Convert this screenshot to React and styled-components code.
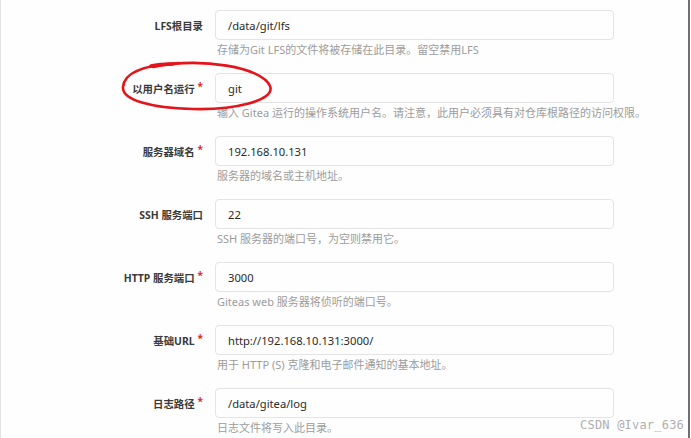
import styled, { createGlobalStyle } from "styled-components";

const GlobalStyle = createGlobalStyle`
  html, body {
    margin: 0;
    padding: 0;
    background: #fff;
  }
  body {
    font-family: "Noto Sans", "Noto Sans CJK SC", sans-serif;
  }
`;

const Frame = styled.div`
  position: relative;
  box-sizing: border-box;
  width: 690px;
  height: 438px;
  overflow: hidden;
  border-left: 1px solid #e2e2e2;
  border-right: 2px solid #707070;
  background: #fefefe;
`;

const Form = styled.div`
  display: flex;
  flex-direction: column;
  padding-top: 10px;
`;

const Field = styled.div`
  display: grid;
  grid-template-columns: 202px 399px;
  column-gap: 12px;
  row-gap: 2px;
  height: 63px;
  align-content: start;
`;

const Label = styled.label`
  align-self: center;
  text-align: right;
  font-size: 10.4px;
  font-weight: 700;
  color: #3a3a3a;
  white-space: nowrap;

  ${({ required }) =>
    required &&
    `
    &::after {
      content: "*";
      color: #db2828;
      margin-left: 3px;
      font-size: 10px;
      position: relative;
      top: -3px;
    }
  `}
`;

const Input = styled.div`
  box-sizing: border-box;
  height: 30px;
  display: flex;
  align-items: center;
  padding-left: 12px;
  border: 1px solid #e4e4e4;
  border-radius: 4px;
  background: #fefefe;
  font-size: 11.2px;
  color: #2a2a2a;
`;

const Help = styled.div`
  grid-column: 2;
  padding-left: 2px;
  font-size: 11px;
  line-height: 15px;
  color: #9c9c9c;
  white-space: nowrap;
`;

const Mark = styled.svg`
  position: absolute;
  left: 0;
  top: 0;
  pointer-events: none;
`;

const Watermark = styled.div`
  position: absolute;
  right: 4px;
  bottom: 6px;
  font-family: "DejaVu Sans Mono", "Liberation Mono", monospace;
  font-size: 12px;
  letter-spacing: 0.2px;
  color: #b0b0b0;
`;

const fields = [
  { label: "LFS根目录", value: "/data/git/lfs", help: "存储为Git LFS的文件将被存储在此目录。留空禁用LFS" },
  {
    label: "以用户名运行",
    required: true,
    value: "git",
    help: "输入 Gitea 运行的操作系统用户名。请注意，此用户必须具有对仓库根路径的访问权限。",
  },
  { label: "服务器域名", required: true, value: "192.168.10.131", help: "服务器的域名或主机地址。" },
  { label: "SSH 服务端口", value: "22", help: "SSH 服务器的端口号，为空则禁用它。" },
  { label: "HTTP 服务端口", required: true, value: "3000", help: "Giteas web 服务器将侦听的端口号。" },
  {
    label: "基础URL",
    required: true,
    value: "http://192.168.10.131:3000/",
    help: "用于 HTTP (S) 克隆和电子邮件通知的基本地址。",
  },
  { label: "日志路径", required: true, value: "/data/gitea/log", help: "日志文件将写入此目录。" },
];

export default function App() {
  return (
    <Frame>
      <GlobalStyle />
      <Form>
        {fields.map((f) => (
          <Field key={f.label}>
            <Label required={f.required}>{f.label}</Label>
            <Input>{f.value}</Input>
            <Help>{f.help}</Help>
          </Field>
        ))}
      </Form>

      {/* red hand-drawn circle around the username field */}
      <Mark width="690" height="438">
        <path
          d="M 152 67 C 200 57, 261 67, 269 86 C 275 101, 232 110, 192 109 C 150 108, 121 100, 122 87 C 123 73, 142 65, 178 63"
          fill="none"
          stroke="#e4141b"
          strokeWidth="2.6"
          strokeLinecap="round"
        />
        <path d="M 150 66 C 158 64, 166 64, 172 64" fill="none" stroke="#e4141b" strokeWidth="3.4" strokeLinecap="round" />
      </Mark>

      <Watermark>CSDN @Ivar_636</Watermark>
    </Frame>
  );
}
